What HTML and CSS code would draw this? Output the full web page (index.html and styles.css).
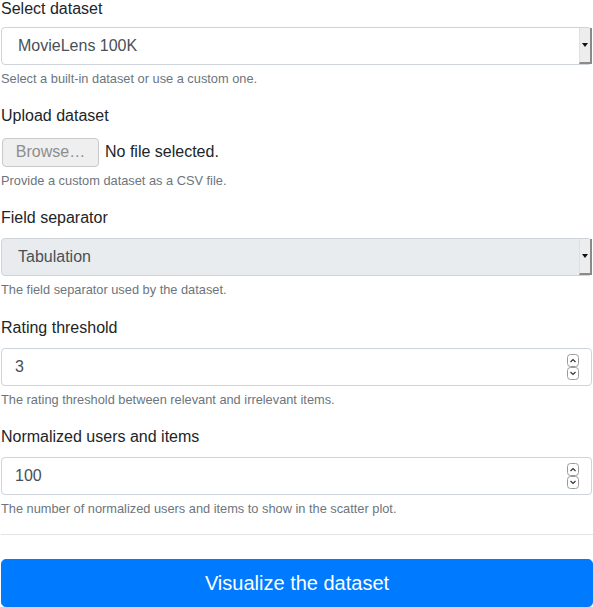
FILE: index.html
```html
<!DOCTYPE html>
<html lang="en">
<head>
<meta charset="utf-8">
<title>Dataset form</title>
<link rel="stylesheet" href="styles.css">
</head>
<body>
<form class="form">
  <div class="form-group">
    <label class="label label-first">Select dataset</label>
    <div class="select-wrap">
      <div class="control select">MovieLens 100K</div>
      <span class="drop"><svg width="6" height="4" viewBox="0 0 6 4"><path d="M0 0H6L3 4Z" fill="#111"/></svg></span>
    </div>
    <small class="help">Select a built-in dataset or use a custom one.</small>
  </div>

  <div class="form-group">
    <label class="label">Upload dataset</label>
    <div class="file">
      <span class="browse">Browse…</span>
      <span class="file-name">No file selected.</span>
    </div>
    <small class="help">Provide a custom dataset as a CSV file.</small>
  </div>

  <div class="form-group">
    <label class="label">Field separator</label>
    <div class="select-wrap">
      <div class="control select disabled">Tabulation</div>
      <span class="drop"><svg width="6" height="4" viewBox="0 0 6 4"><path d="M0 0H6L3 4Z" fill="#111"/></svg></span>
    </div>
    <small class="help">The field separator used by the dataset.</small>
  </div>

  <div class="form-group">
    <label class="label">Rating threshold</label>
    <div class="select-wrap">
      <div class="control number">3</div>
      <span class="spin">
        <svg width="14" height="26" viewBox="0 0 14 26">
          <rect x="1.5" y="0.5" width="11" height="12" rx="3" fill="#fff" stroke="#9a9a9a"/>
          <rect x="1.5" y="13.5" width="11" height="12" rx="3" fill="#fff" stroke="#9a9a9a"/>
          <path d="M4.5 8L7 5.5L9.5 8" fill="none" stroke="#333" stroke-width="1.2"/>
          <path d="M4.5 18L7 20.5L9.5 18" fill="none" stroke="#333" stroke-width="1.2"/>
        </svg>
      </span>
    </div>
    <small class="help">The rating threshold between relevant and irrelevant items.</small>
  </div>

  <div class="form-group">
    <label class="label">Normalized users and items</label>
    <div class="select-wrap">
      <div class="control number">100</div>
      <span class="spin">
        <svg width="14" height="26" viewBox="0 0 14 26">
          <rect x="1.5" y="0.5" width="11" height="12" rx="3" fill="#fff" stroke="#9a9a9a"/>
          <rect x="1.5" y="13.5" width="11" height="12" rx="3" fill="#fff" stroke="#9a9a9a"/>
          <path d="M4.5 8L7 5.5L9.5 8" fill="none" stroke="#333" stroke-width="1.2"/>
          <path d="M4.5 18L7 20.5L9.5 18" fill="none" stroke="#333" stroke-width="1.2"/>
        </svg>
      </span>
    </div>
    <small class="help">The number of normalized users and items to show in the scatter plot.</small>
  </div>

  <hr class="rule">

  <button type="button" class="btn">Visualize the dataset</button>
</form>
</body>
</html>
```

FILE: styles.css
```css
* { box-sizing: border-box; }

html, body {
  margin: 0;
  padding: 0;
  background: #fff;
  overflow: hidden;
}

body {
  font-family: "Liberation Sans", Arial, sans-serif;
  font-size: 16px;
  line-height: 1.5;
  color: #212529;
}

.form {
  padding-left: 1px;
  width: 593px;
}

.form-group {
  margin-bottom: 16px;
}

.label {
  display: block;
  margin-bottom: 8px;
  color: #212529;
}

.label-first {
  line-height: 17px;
  margin-bottom: 10px;
}

.select-wrap {
  position: relative;
  width: 591px;
}

.control {
  height: 38px;
  width: 100%;
  padding: 6px 12px;
  border: 1px solid #ced4da;
  border-radius: 4px;
  background: #fff;
  color: #495057;
  font-size: 16px;
  line-height: 24px;
}

.select {
  padding-left: 16px;
}

.number {
  padding-left: 13px;
}

.disabled {
  background: #e9ecef;
}

.drop {
  position: absolute;
  right: 0;
  top: 1px;
  bottom: 1px;
  width: 13px;
  background: #ededed;
  border-right: 2px solid #8a8a8a;
  border-bottom: 2px solid #8a8a8a;
  border-left: 1px solid #e0e0e0;
  display: flex;
  align-items: center;
  justify-content: center;
}

.spin {
  position: absolute;
  right: 12px;
  top: 6px;
  width: 14px;
  height: 26px;
  display: flex;
}

.help {
  display: block;
  margin-top: 4px;
  font-size: 12.8px;
  line-height: 19.2px;
  color: #6c757d;
}

.file {
  display: flex;
  align-items: center;
  height: 31px;
  padding-top: 1px;
}

.browse {
  display: inline-flex;
  align-items: center;
  justify-content: center;
  width: 97px;
  height: 29px;
  margin-left: 1px;
  border: 1px solid #c9c9c9;
  border-radius: 4px;
  background: #efefef;
  color: #8d8d8d;
  font-size: 16px;
}

.file-name {
  margin-left: 6px;
  color: #212529;
  font-size: 16px;
}

.rule {
  margin: 16px 0 24px;
  border: 0;
  border-top: 1px solid rgba(0, 0, 0, 0.1);
  width: 592px;
}

.btn {
  display: block;
  width: 592px;
  height: 48px;
  padding: 8px 16px;
  border: 1px solid #007bff;
  border-radius: 4.8px;
  background: #007bff;
  color: #fff;
  font-family: "Liberation Sans", Arial, sans-serif;
  font-size: 20px;
  line-height: 30px;
  text-align: center;
}
```
